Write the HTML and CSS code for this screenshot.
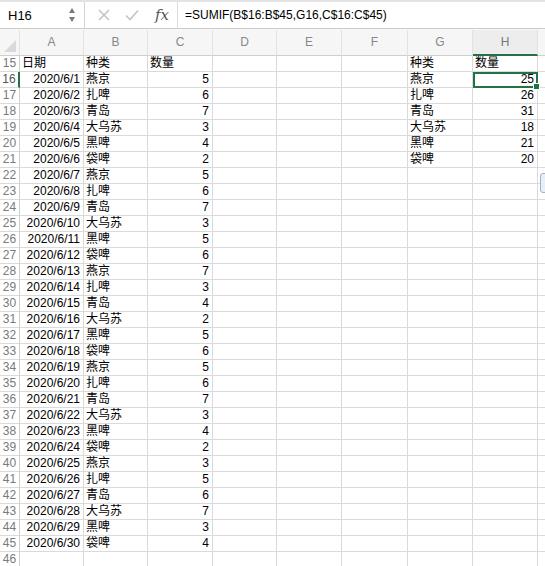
FILE: index.html
```html
<!DOCTYPE html>
<html lang="zh">
<head>
<meta charset="utf-8">
<title>Sheet</title>
<link rel="stylesheet" href="styles.css">
</head>
<body>
<div class="app">
  <div class="fbar">
    <div class="namebox">
      <span class="ref">H16</span>
      <span class="spin"><i class="up"></i><i class="down"></i></span>
    </div>
    <div class="fbtns">
      <svg class="ico" width="14" height="14" viewBox="0 0 14 14"><path d="M2 2 L12 12 M12 2 L2 12" stroke="#c4c4c4" stroke-width="1.6" fill="none"/></svg>
      <svg class="ico" width="16" height="14" viewBox="0 0 16 14"><path d="M2 7.5 L6 11.5 L14 2.5" stroke="#c4c4c4" stroke-width="1.6" fill="none"/></svg>
      <span class="fx">fx</span>
    </div>
    <div class="finput">=SUMIF(B$16:B$45,G16,C$16:C$45)</div>
  </div>

  <div class="sheet">
    <div class="row hdr">
      <div class="c rh corner"><span class="tri"></span></div>
      <div class="c a">A</div><div class="c b">B</div><div class="c cc">C</div><div class="c d">D</div><div class="c e">E</div><div class="c f">F</div><div class="c g">G</div><div class="c h sel">H</div><div class="c z"></div>
    </div>
    <div class="row"><div class="c rh">15</div><div class="c a">日期</div><div class="c b">种类</div><div class="c cc">数量</div><div class="c d"></div><div class="c e"></div><div class="c f"></div><div class="c g">种类</div><div class="c h">数量</div><div class="c z"></div></div>
    <div class="row"><div class="c rh cur">16</div><div class="c a r">2020/6/1</div><div class="c b">燕京</div><div class="c cc r">5</div><div class="c d"></div><div class="c e"></div><div class="c f"></div><div class="c g">燕京</div><div class="c h r active">25<span class="handle"></span></div><div class="c z"></div></div>
    <div class="row"><div class="c rh">17</div><div class="c a r">2020/6/2</div><div class="c b">扎啤</div><div class="c cc r">6</div><div class="c d"></div><div class="c e"></div><div class="c f"></div><div class="c g">扎啤</div><div class="c h r">26</div><div class="c z"></div></div>
    <div class="row"><div class="c rh">18</div><div class="c a r">2020/6/3</div><div class="c b">青岛</div><div class="c cc r">7</div><div class="c d"></div><div class="c e"></div><div class="c f"></div><div class="c g">青岛</div><div class="c h r">31</div><div class="c z"></div></div>
    <div class="row"><div class="c rh">19</div><div class="c a r">2020/6/4</div><div class="c b">大乌苏</div><div class="c cc r">3</div><div class="c d"></div><div class="c e"></div><div class="c f"></div><div class="c g">大乌苏</div><div class="c h r">18</div><div class="c z"></div></div>
    <div class="row"><div class="c rh">20</div><div class="c a r">2020/6/5</div><div class="c b">黑啤</div><div class="c cc r">4</div><div class="c d"></div><div class="c e"></div><div class="c f"></div><div class="c g">黑啤</div><div class="c h r">21</div><div class="c z"></div></div>
    <div class="row"><div class="c rh">21</div><div class="c a r">2020/6/6</div><div class="c b">袋啤</div><div class="c cc r">2</div><div class="c d"></div><div class="c e"></div><div class="c f"></div><div class="c g">袋啤</div><div class="c h r">20</div><div class="c z"></div></div>
    <div class="row"><div class="c rh">22</div><div class="c a r">2020/6/7</div><div class="c b">燕京</div><div class="c cc r">5</div><div class="c d"></div><div class="c e"></div><div class="c f"></div><div class="c g"></div><div class="c h"></div><div class="c z"></div></div>
    <div class="row"><div class="c rh">23</div><div class="c a r">2020/6/8</div><div class="c b">扎啤</div><div class="c cc r">6</div><div class="c d"></div><div class="c e"></div><div class="c f"></div><div class="c g"></div><div class="c h"></div><div class="c z"></div></div>
    <div class="row"><div class="c rh">24</div><div class="c a r">2020/6/9</div><div class="c b">青岛</div><div class="c cc r">7</div><div class="c d"></div><div class="c e"></div><div class="c f"></div><div class="c g"></div><div class="c h"></div><div class="c z"></div></div>
    <div class="row"><div class="c rh">25</div><div class="c a r">2020/6/10</div><div class="c b">大乌苏</div><div class="c cc r">3</div><div class="c d"></div><div class="c e"></div><div class="c f"></div><div class="c g"></div><div class="c h"></div><div class="c z"></div></div>
    <div class="row"><div class="c rh">26</div><div class="c a r">2020/6/11</div><div class="c b">黑啤</div><div class="c cc r">5</div><div class="c d"></div><div class="c e"></div><div class="c f"></div><div class="c g"></div><div class="c h"></div><div class="c z"></div></div>
    <div class="row"><div class="c rh">27</div><div class="c a r">2020/6/12</div><div class="c b">袋啤</div><div class="c cc r">6</div><div class="c d"></div><div class="c e"></div><div class="c f"></div><div class="c g"></div><div class="c h"></div><div class="c z"></div></div>
    <div class="row"><div class="c rh">28</div><div class="c a r">2020/6/13</div><div class="c b">燕京</div><div class="c cc r">7</div><div class="c d"></div><div class="c e"></div><div class="c f"></div><div class="c g"></div><div class="c h"></div><div class="c z"></div></div>
    <div class="row"><div class="c rh">29</div><div class="c a r">2020/6/14</div><div class="c b">扎啤</div><div class="c cc r">3</div><div class="c d"></div><div class="c e"></div><div class="c f"></div><div class="c g"></div><div class="c h"></div><div class="c z"></div></div>
    <div class="row"><div class="c rh">30</div><div class="c a r">2020/6/15</div><div class="c b">青岛</div><div class="c cc r">4</div><div class="c d"></div><div class="c e"></div><div class="c f"></div><div class="c g"></div><div class="c h"></div><div class="c z"></div></div>
    <div class="row"><div class="c rh">31</div><div class="c a r">2020/6/16</div><div class="c b">大乌苏</div><div class="c cc r">2</div><div class="c d"></div><div class="c e"></div><div class="c f"></div><div class="c g"></div><div class="c h"></div><div class="c z"></div></div>
    <div class="row"><div class="c rh">32</div><div class="c a r">2020/6/17</div><div class="c b">黑啤</div><div class="c cc r">5</div><div class="c d"></div><div class="c e"></div><div class="c f"></div><div class="c g"></div><div class="c h"></div><div class="c z"></div></div>
    <div class="row"><div class="c rh">33</div><div class="c a r">2020/6/18</div><div class="c b">袋啤</div><div class="c cc r">6</div><div class="c d"></div><div class="c e"></div><div class="c f"></div><div class="c g"></div><div class="c h"></div><div class="c z"></div></div>
    <div class="row"><div class="c rh">34</div><div class="c a r">2020/6/19</div><div class="c b">燕京</div><div class="c cc r">5</div><div class="c d"></div><div class="c e"></div><div class="c f"></div><div class="c g"></div><div class="c h"></div><div class="c z"></div></div>
    <div class="row"><div class="c rh">35</div><div class="c a r">2020/6/20</div><div class="c b">扎啤</div><div class="c cc r">6</div><div class="c d"></div><div class="c e"></div><div class="c f"></div><div class="c g"></div><div class="c h"></div><div class="c z"></div></div>
    <div class="row"><div class="c rh">36</div><div class="c a r">2020/6/21</div><div class="c b">青岛</div><div class="c cc r">7</div><div class="c d"></div><div class="c e"></div><div class="c f"></div><div class="c g"></div><div class="c h"></div><div class="c z"></div></div>
    <div class="row"><div class="c rh">37</div><div class="c a r">2020/6/22</div><div class="c b">大乌苏</div><div class="c cc r">3</div><div class="c d"></div><div class="c e"></div><div class="c f"></div><div class="c g"></div><div class="c h"></div><div class="c z"></div></div>
    <div class="row"><div class="c rh">38</div><div class="c a r">2020/6/23</div><div class="c b">黑啤</div><div class="c cc r">4</div><div class="c d"></div><div class="c e"></div><div class="c f"></div><div class="c g"></div><div class="c h"></div><div class="c z"></div></div>
    <div class="row"><div class="c rh">39</div><div class="c a r">2020/6/24</div><div class="c b">袋啤</div><div class="c cc r">2</div><div class="c d"></div><div class="c e"></div><div class="c f"></div><div class="c g"></div><div class="c h"></div><div class="c z"></div></div>
    <div class="row"><div class="c rh">40</div><div class="c a r">2020/6/25</div><div class="c b">燕京</div><div class="c cc r">3</div><div class="c d"></div><div class="c e"></div><div class="c f"></div><div class="c g"></div><div class="c h"></div><div class="c z"></div></div>
    <div class="row"><div class="c rh">41</div><div class="c a r">2020/6/26</div><div class="c b">扎啤</div><div class="c cc r">5</div><div class="c d"></div><div class="c e"></div><div class="c f"></div><div class="c g"></div><div class="c h"></div><div class="c z"></div></div>
    <div class="row"><div class="c rh">42</div><div class="c a r">2020/6/27</div><div class="c b">青岛</div><div class="c cc r">6</div><div class="c d"></div><div class="c e"></div><div class="c f"></div><div class="c g"></div><div class="c h"></div><div class="c z"></div></div>
    <div class="row"><div class="c rh">43</div><div class="c a r">2020/6/28</div><div class="c b">大乌苏</div><div class="c cc r">7</div><div class="c d"></div><div class="c e"></div><div class="c f"></div><div class="c g"></div><div class="c h"></div><div class="c z"></div></div>
    <div class="row"><div class="c rh">44</div><div class="c a r">2020/6/29</div><div class="c b">黑啤</div><div class="c cc r">3</div><div class="c d"></div><div class="c e"></div><div class="c f"></div><div class="c g"></div><div class="c h"></div><div class="c z"></div></div>
    <div class="row"><div class="c rh">45</div><div class="c a r">2020/6/30</div><div class="c b">袋啤</div><div class="c cc r">4</div><div class="c d"></div><div class="c e"></div><div class="c f"></div><div class="c g"></div><div class="c h"></div><div class="c z"></div></div>
    <div class="row"><div class="c rh">46</div><div class="c a"></div><div class="c b"></div><div class="c cc"></div><div class="c d"></div><div class="c e"></div><div class="c f"></div><div class="c g"></div><div class="c h"></div><div class="c z"></div></div>
    <div class="quick"></div>
  </div>
</div>
</body>
</html>
```

FILE: styles.css
```css
html, body {
  margin: 0;
  padding: 0;
  background: #fff;
}
body {
  width: 545px;
  height: 566px;
  overflow: hidden;
  font-family: "Liberation Sans", "Noto Sans CJK SC", sans-serif;
  font-size: 12px;
  color: #000;
}
.app {
  display: flex;
  flex-direction: column;
  width: 545px;
}

/* formula bar */
.fbar {
  display: flex;
  align-items: stretch;
  background: #f4f4f4;
  border-top: 2px solid #e3e3e3;
  border-bottom: 1px solid #c9c9c9;
  height: 26px;
}
.namebox {
  width: 85px;
  background: #fff;
  border-right: 1px solid #d4d4d4;
  display: flex;
  align-items: center;
  justify-content: space-between;
  padding: 0 8px 0 8px;
  box-sizing: border-box;
  font-size: 13px;
}
.spin {
  display: flex;
  flex-direction: column;
  gap: 4px;
  margin-right: 1px;
}
.spin i {
  display: block;
  width: 0;
  height: 0;
  border-left: 3.5px solid transparent;
  border-right: 3.5px solid transparent;
}
.spin .up { border-bottom: 5px solid #7a7a7a; }
.spin .down { border-top: 5px solid #7a7a7a; }
.fbtns {
  width: 92px;
  display: flex;
  align-items: center;
  padding-left: 12px;
  gap: 13px;
  box-sizing: border-box;
  background: #fff;
}
.fx {
  font-family: "DejaVu Serif", "Liberation Serif", serif;
  font-style: italic;
  font-size: 15px;
  color: #555;
  margin-left: 2px;
}
.finput {
  flex: 1;
  background: #fff;
  border-left: 1px solid #dcdcdc;
  display: flex;
  align-items: center;
  padding-left: 7px;
  font-size: 12px;
}

/* sheet */
.sheet {
  position: relative;
  display: flex;
  flex-direction: column;
  border-top: 1px solid #fafafa;
}
.row {
  display: flex;
  height: 16px;
}
.c {
  box-sizing: border-box;
  border-right: 1px solid #dadada;
  border-bottom: 1px solid #dadada;
  height: 100%;
  line-height: 15px;
  padding: 0 2px;
  white-space: nowrap;
  overflow: visible;
  flex: none;
  position: relative;
}
.r { text-align: right; padding-right: 3px; }
.rh {
  width: 20px;
  padding: 0;
  text-align: center;
  color: #7a7a7a;
  background: #fff;
  border-right-color: #cfcfcf;
}
.rh.cur {
  border-right: 2px solid #217346;
  color: #555;
}
.a { width: 64px; }
.b { width: 64px; }
.cc { width: 65px; }
.d { width: 64px; }
.e { width: 65px; }
.f { width: 66px; }
.g { width: 65px; }
.h { width: 65px; }
.z { width: 7px; border-right: none; }

.hdr { height: 26px; }
.hdr .c {
  line-height: 25px;
  text-align: center;
  color: #888;
  background: #f6f6f6;
  border-bottom-color: #cfcfcf;
  border-right-color: #e2e2e2;
}
.hdr .sel {
  border-bottom: 2px solid #217346;
  line-height: 24px;
  background: #ededed;
  color: #777;
}
.corner { position: relative; }
.tri {
  position: absolute;
  right: 3px;
  bottom: 3px;
  width: 0;
  height: 0;
  border-left: 12px solid transparent;
  border-bottom: 12px solid #d9d9d9;
}

.active {
  outline: 2px solid #217346;
  outline-offset: -2px;
  z-index: 2;
}
.active .handle {
  position: absolute;
  right: -3px;
  bottom: -3px;
  width: 5px;
  height: 5px;
  background: #217346;
  border: 1px solid #fff;
}

.quick {
  position: absolute;
  left: 540px;
  top: 143px;
  width: 12px;
  height: 18px;
  border: 1px solid #9fb3c8;
  background: #e9eff6;
  border-radius: 3px;
}
```
